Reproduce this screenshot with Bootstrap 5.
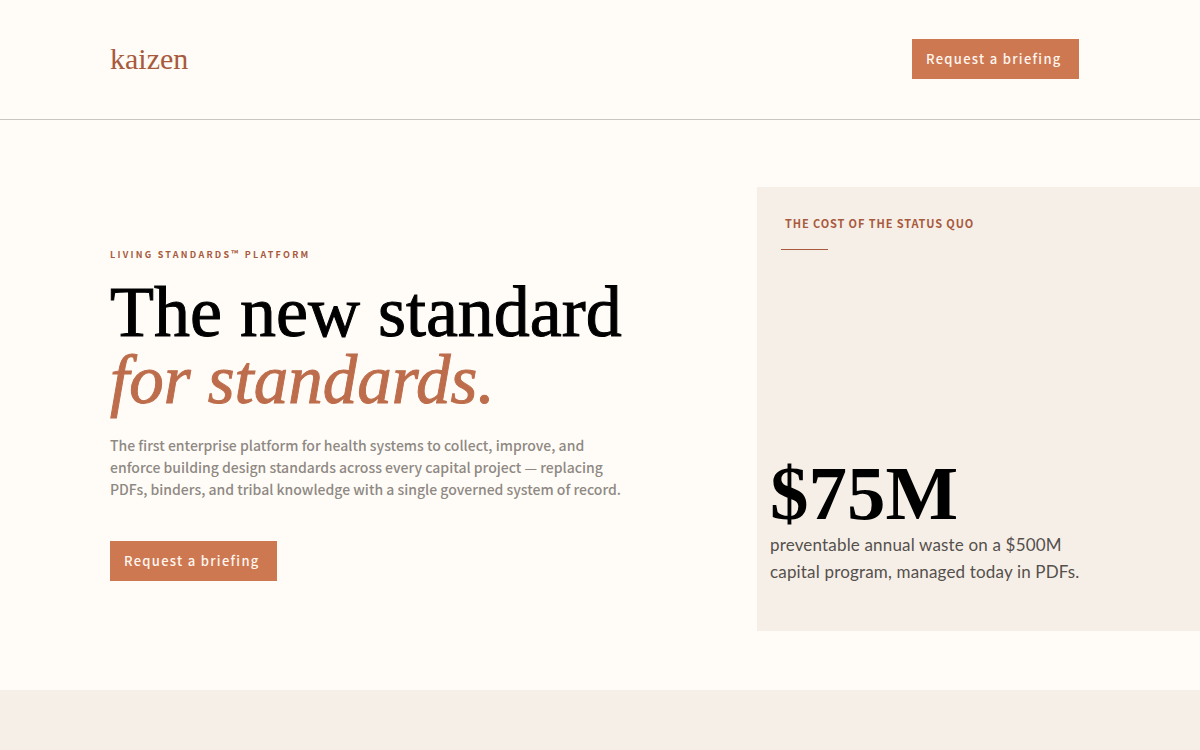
<!DOCTYPE html>
<html lang="en">
<head>
<meta charset="utf-8">
<meta name="viewport" content="width=device-width, initial-scale=1">
<title>Kaizen – Living Standards Platform</title>
<link href="https://cdn.jsdelivr.net/npm/bootstrap@5.3.0/dist/css/bootstrap.min.css" rel="stylesheet">
<style>
  :root { --paper: #fffcf8; --sand: #f6efe8; --clay: #ce7852; --rust: #a85a3c; }
  body { background: var(--paper); color: #000; font-family: "Noto Sans CJK SC", "Open Sans", sans-serif; }
  .site-header { padding: 39px 121px 40px 110px; border-bottom: 1px solid #c9c5c1; }
  .brand { font: 30px/40px "Liberation Serif", serif; color: var(--rust); }
  .btn-brief { --bs-btn-color: #fff6ee; --bs-btn-bg: var(--clay); --bs-btn-hover-color: #fff; --bs-btn-hover-bg: var(--rust);
    --bs-btn-active-bg: var(--rust); --bs-btn-active-color: #fff; --bs-btn-border-width: 0px;
    --bs-btn-padding-x: 14px; --bs-btn-padding-y: 10px; --bs-btn-font-size: 13px; --bs-btn-line-height: 20px; --bs-btn-font-weight: 500;
    min-width: 167px; letter-spacing: .1em; text-align: left; }
  .hero { display: grid; grid-template-columns: 757fr 443fr; padding: 67px 0 59px; }
  .hero-copy { padding: 60px 0 0 110px; }
  .eyebrow { font-size: 9px; line-height: 16px; font-weight: 700; letter-spacing: .25em; color: var(--rust); }
  .headline { font: 72px/67px "Liberation Serif", serif; margin: 16px 0 20px; -webkit-text-stroke: 1px currentColor; }
  .headline em { font-size: 69px; color: #bd6d4b; }
  .intro { max-width: 580px; font-size: 14px; line-height: 22px; font-weight: 500; color: #8f8983; margin-bottom: 41px; }
  .cost-panel { background: var(--sand); min-height: 444px; padding: 28px 24px 46px; }
  .cost-title { font-size: 11px; line-height: 16px; font-weight: 700; letter-spacing: .08em; color: var(--rust); padding-left: 4px; margin-bottom: 18px; }
  .rule { width: 47px; height: 1px; background: var(--rust); }
  .cost-body { margin-left: -11px; }
  .figure-total { font: 700 77px/76px "Liberation Serif", serif; }
  .cost-note { font: 17px/27px Lato, sans-serif; color: #55504c; letter-spacing: .01em; }
  .next-band { background: var(--sand); min-height: 60px; }
  @media (max-width: 991px) {
    .hero { grid-template-columns: 1fr; gap: 48px; }
    .site-header, .hero-copy { padding-left: 24px; padding-right: 24px; }
    .headline, .headline em { font-size: 48px; line-height: 52px; }
  }
</style>
</head>
<body>
<header class="site-header d-flex align-items-center justify-content-between">
  <a class="brand text-decoration-none" href="#">kaizen</a>
  <button type="button" class="btn btn-brief rounded-0">Request a briefing</button>
</header>
<main>
  <section class="hero">
    <div class="hero-copy">
      <div class="eyebrow">LIVING STANDARDS™ PLATFORM</div>
      <h1 class="headline">The new standard<br><em>for standards.</em></h1>
      <p class="intro">The first enterprise platform for health systems to collect, improve, and<br class="d-none d-lg-inline"> enforce building design standards across every capital project — replacing<br class="d-none d-lg-inline"> PDFs, binders, and tribal knowledge with a single governed system of record.</p>
      <button type="button" class="btn btn-brief rounded-0">Request a briefing</button>
    </div>
    <aside class="cost-panel d-flex flex-column justify-content-between">
      <div>
        <h2 class="cost-title">THE COST OF THE STATUS QUO</h2>
        <div class="rule"></div>
      </div>
      <div class="cost-body">
        <div class="figure-total">$75M</div>
        <p class="cost-note mb-0">preventable annual waste on a $500M<br>capital program, managed today in PDFs.</p>
      </div>
    </aside>
  </section>
  <section class="next-band"></section>
</main>
<script src="https://cdn.jsdelivr.net/npm/bootstrap@5.3.0/dist/js/bootstrap.bundle.min.js"></script>
</body>
</html>
